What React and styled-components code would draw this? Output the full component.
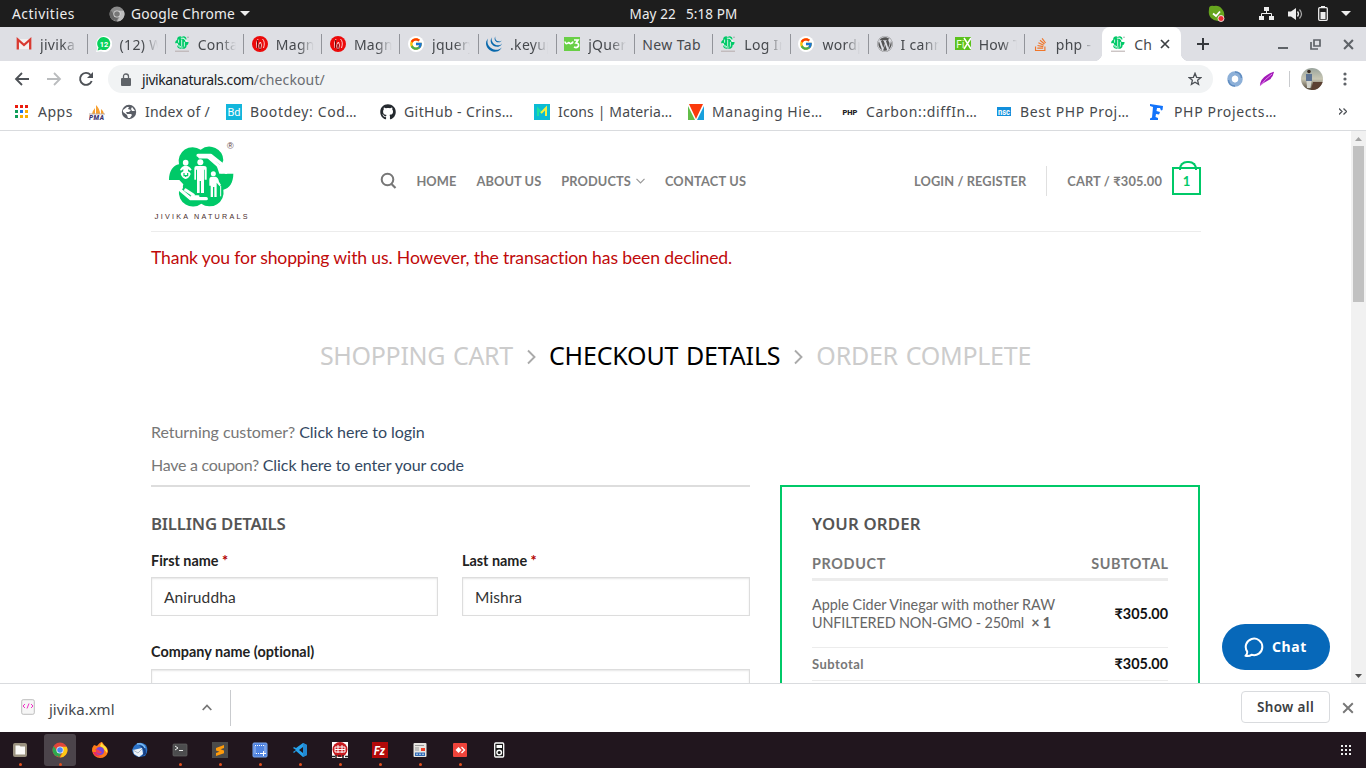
import React from "react";
import styled, { createGlobalStyle } from "styled-components";
import { FcGoogle } from "react-icons/fc";
import { FaWordpress, FaGithub, FaStackOverflow } from "react-icons/fa";
import { SiJquery } from "react-icons/si";

const UI = `"Noto Sans", "Open Sans", sans-serif`;
const LATO = `Lato, "Noto Sans", sans-serif`;
const GREEN = "#00c968";

const Global = createGlobalStyle`
  *{box-sizing:border-box}
  body{margin:0;background:#fff;overflow:hidden}
  svg{display:block;flex:none}
`;

const Screen = styled.div`
  width: 1366px;
  height: 768px;
  display: flex;
  flex-direction: column;
  overflow: hidden;
  font-family: ${UI};
  white-space: nowrap;
`;

const Label = styled.span`
  font-size: ${(p) => p.$size || 14}px;
  letter-spacing: ${(p) => p.$ls || 0}px;
  color: ${(p) => p.$color || "inherit"};
  font-weight: ${(p) => p.$weight || 400};
`;

/* ---------- desktop top bar ---------- */
const TopBar = styled.div`
  height: 27px;
  flex: none;
  background: #1d1d1d;
  color: #ededed;
  display: grid;
  grid-template-columns: 600px 166px 600px;
  align-items: center;
`;
const TopLeft = styled.div`
  display: flex;
  align-items: center;
  padding-left: 12px;
  & > svg:first-of-type { margin: 0 6px 0 34px; }
  & > svg:last-of-type { margin-left: 5px; }
`;
const Clock = styled.div`
  display: flex;
  justify-content: center;
  gap: 10px;
  padding-left: 1px;
`;
const Tray = styled.div`
  display: flex;
  align-items: center;
  justify-content: flex-end;
  padding-right: 15px;
`;
const TrayIcon = styled.div`
  margin-right: ${(p) => p.$gap}px;
`;

/* ---------- browser tabs ---------- */
const TabStrip = styled.div`
  height: 34px;
  flex: none;
  background: #dedfe4;
  display: flex;
  padding-left: 10px;
`;
const Tab = styled.div`
  width: 78.1px;
  height: 34px;
  display: flex;
  align-items: center;
  padding-left: ${(p) => (p.$first ? 6 : 7.5)}px;
  flex: none;
  background: linear-gradient(#92949a, #92949a) right 0 top 7px / ${(p) => (p.$last ? 0 : 1)}px 20px no-repeat;
`;
const TabTitle = styled.div`
  width: 38px;
  margin-left: 8px;
  overflow: hidden;
  font-size: 14px;
  letter-spacing: 0.3px;
  color: #46494d;
  mask-image: linear-gradient(90deg, #000 60%, transparent 100%);
`;
const NewTabTitle = styled(TabTitle)`
  width: 64px;
  margin-left: 0;
  letter-spacing: 0.4px;
  mask-image: none;
`;
const ActiveTab = styled.div`
  width: 79px;
  height: 34px;
  margin-left: -1px;
  background: #fff;
  border-radius: 8px 8px 0 0;
  display: flex;
  align-items: center;
  padding-left: 8px;
  position: relative;
  font-size: 14px;
  color: #46494d;
  &::before, &::after {
    content: "";
    position: absolute;
    bottom: 0;
    width: 8px;
    height: 8px;
  }
  &::before { left: -8px; background: radial-gradient(circle at 0 0, transparent 8px, #fff 8.5px); }
  &::after { right: -8px; background: radial-gradient(circle at 100% 0, transparent 8px, #fff 8.5px); }
  & > span { margin: 0 8px 0 8px; width: 18px; overflow: hidden; }
`;
const WindowButtons = styled.div`
  flex: 1;
  display: flex;
  align-items: center;
  padding-left: 16px;
  svg:nth-child(2) { margin-left: 69px; }
  svg:nth-child(3) { margin-left: 22px; }
  svg:nth-child(4) { margin-left: 22px; }
`;

/* ---------- toolbar ---------- */
const Toolbar = styled.div`
  height: 35px;
  flex: none;
  background: #fff;
  display: flex;
  align-items: center;
  padding-left: 14px;
`;
const NavIcons = styled.div`
  display: flex;
  gap: 16px;
  width: 94px;
`;
const Address = styled.div`
  width: 1105px;
  height: 28px;
  border-radius: 14px;
  background: #f1f3f4;
  margin-top: 1px;
  display: flex;
  align-items: center;
  padding: 0 11px 0 13px;
  color: #202124;
  & > span:first-of-type { margin-left: 11px; }
  & > svg:last-child { margin-left: auto; }
`;
const Extensions = styled.div`
  display: flex;
  align-items: center;
  padding-left: 14px;
  & > svg:nth-child(2) { margin-left: 16px; }
  & > svg:last-child { margin-left: 20px; }
`;
const ToolDivider = styled.div`
  width: 1px;
  height: 16px;
  margin: 0 11px 0 14px;
  background: #c9cbce;
`;

/* ---------- bookmarks ---------- */
const Bookmarks = styled.div`
  height: 35px;
  flex: none;
  background: #fff;
  border-bottom: 1px solid #d9dbde;
  display: flex;
  align-items: center;
  padding: 0 0 3px 15px;
  color: #46494d;
`;
const Bookmark = styled.div`
  width: ${(p) => p.$w}px;
  flex: none;
  display: flex;
  align-items: center;
  gap: ${(p) => p.$gap ?? 8}px;
`;

/* ---------- web page ---------- */
const Viewport = styled.div`
  height: 552px;
  flex: none;
  display: flex;
  background: #fff;
  position: relative;
  overflow: hidden;
`;
const Page = styled.main`
  width: 1351px;
  height: 552px;
  overflow: hidden;
  font-family: ${LATO};
  font-variant-ligatures: none;
`;
const Container = styled.div`
  width: 1050px;
  margin: 0 0 0 151px;
`;
const Header = styled.header`
  height: 101px;
  border-bottom: 1px solid #ececec;
  display: flex;
  align-items: center;
`;
const LogoBox = styled.div`
  width: 229px;
  height: 100px;
  padding: 8px 0 0 1px;
`;
const Nav = styled.nav`
  display: flex;
  align-items: center;
  font-size: 12.8px;
  font-weight: 700;
  color: #7d7d7d;
  letter-spacing: 0.1px;
  margin-top: -1px;
`;
const NavLink = styled.a`
  margin-left: ${(p) => p.$ml || 20}px;
  letter-spacing: ${(p) => p.$ls || 0.1}px;
  display: flex;
  align-items: center;
  gap: 5px;
`;
const Account = styled(Nav)`
  margin-left: auto;
`;
const AccountRule = styled.div`
  width: 1px;
  height: 30px;
  background: #e0e0e0;
  margin: 0 20px;
`;
const CartTotal = styled.span`
  letter-spacing: 0.17px;
`;
const CartBag = styled.div`
  width: 29px;
  height: 28px;
  border: 2px solid ${GREEN};
  margin-left: 10px;
  color: ${GREEN};
  display: flex;
  align-items: center;
  justify-content: center;
  position: relative;
  font-size: 13px;
  &::before {
    content: "";
    position: absolute;
    width: 14px;
    height: 7px;
    left: 5px;
    top: -8px;
    border: 2px solid ${GREEN};
    border-bottom: 0;
    border-radius: 8px 8px 0 0;
  }
`;
const Notice = styled.p`
  margin: 13px 0 0;
  line-height: 26px;
  font-size: 17.6px;
  letter-spacing: -0.14px;
  color: #c00a0a;
`;
const Steps = styled.div`
  height: 40px;
  margin: 64px 0 0 -1px;
  display: flex;
  align-items: center;
  justify-content: center;
  font-family: ${UI};
  font-size: 25px;
  color: #ccc;
  text-transform: uppercase;
`;
const Step = styled.span`
  letter-spacing: ${(p) => p.$ls}px;
  word-spacing: 1.5px;
  color: ${(p) => (p.$current ? "#000" : "#ccc")};
`;
const StepArrow = styled.svg`
  margin: 3px 13px 0 14px;
`;
const Prompt = styled.p`
  margin: 0;
  height: 33px;
  line-height: 26px;
  font-size: 16px;
  letter-spacing: ${(p) => p.$ls}px;
  color: #777;
  & > a { color: #334862; letter-spacing: -0.05px; }
`;
const Prompts = styled.div`
  padding-top: 44px;
  height: 110px;
`;
const Columns = styled.div`
  display: flex;
  gap: 30px;
`;
const Billing = styled.section`
  width: 599px;
  border-top: 2px solid #ddd;
  padding-top: 24px;
`;
const SectionTitle = styled.h3`
  margin: -1px 0 1px;
  height: 28px;
  line-height: 28px;
  font-family: ${UI};
  font-size: 16.8px;
  font-weight: 600;
  letter-spacing: ${(p) => p.$ls || 0}px;
  color: #555;
`;
const FieldRow = styled.div`
  display: grid;
  grid-template-columns: 287px 288px;
  gap: 24px;
  padding-top: 10px;
`;
const Field = styled.div`
  & > label {
    display: block;
    font-size: 14.4px;
    line-height: 24px;
    height: ${(p) => p.$labelHeight || 28}px;
    font-weight: 700;
    color: #222;
    letter-spacing: ${(p) => p.$ls || 0}px;
  }
  & em { font-style: normal; color: #b20000; }
`;
const Input = styled.div`
  height: 39px;
  margin-bottom: 24px;
  border: 1px solid #ddd;
  box-shadow: inset 0 1px 2px rgba(0, 0, 0, 0.1);
  padding: 0 12px;
  line-height: 38px;
  font-size: 15.5px;
  letter-spacing: 0.1px;
  color: #333;
`;
const Order = styled.section`
  width: 420px;
  height: 300px;
  border: 2px solid ${GREEN};
  padding: 24px 30px 0;
`;
const OrderHead = styled.div`
  height: 42px;
  padding-top: 13px;
  border-bottom: 3px solid #ececec;
  display: flex;
  justify-content: space-between;
  font-size: 14.4px;
  line-height: 24px;
  font-weight: 700;
  letter-spacing: 0.65px;
  color: #777;
  & > span:last-child { letter-spacing: 0.6px; margin-right: -0.6px; }
`;
const OrderRow = styled.div`
  height: ${(p) => p.$h}px;
  border-bottom: 1px solid #ececec;
  display: flex;
  justify-content: space-between;
  align-items: center;
  font-size: 14.4px;
  line-height: 18px;
  color: #666;
`;
const Variant = styled.div`
  letter-spacing: -0.14px;
`;
const Price = styled.strong`
  color: #111;
  font-size: 14.4px;
`;
const Scrollbar = styled.div`
  width: 15px;
  background: #f1f1f1;
  display: flex;
  flex-direction: column;
  align-items: center;
  justify-content: space-between;
  padding: 6px 0 5px;
`;
const Thumb = styled.div`
  width: 11px;
  height: 156px;
  background: #c1c1c1;
  margin: 5px 0 auto;
`;
const ChatButton = styled.div`
  position: absolute;
  left: 1222px;
  top: 493px;
  width: 108px;
  height: 46px;
  border-radius: 23px;
  background: #0768b9;
  color: #fff;
  display: flex;
  align-items: center;
  padding: 0 0 1px 22px;
  gap: 8px;
`;

/* ---------- downloads ---------- */
const Downloads = styled.div`
  height: 49px;
  flex: none;
  border-top: 1px solid #d9dbde;
  background: #fff;
  display: flex;
  align-items: center;
  padding-right: 12px;
  color: #46494d;
`;
const DownloadItem = styled.div`
  width: 231px;
  height: 36px;
  border-right: 1px solid #c9cbce;
  display: flex;
  align-items: center;
  padding: 0 18px 0 21px;
  & > span { margin: 1px auto 0 14px; }
  & > svg { margin-top: -2px; }
`;
const ShowAll = styled.div`
  width: 89px;
  height: 32px;
  margin: 0 12px 2px auto;
  border: 1px solid #d9dbde;
  border-radius: 4px;
  display: flex;
  align-items: center;
  justify-content: center;
`;

/* ---------- dock ---------- */
const Dock = styled.div`
  height: 36px;
  flex: none;
  background: #21161e;
  display: flex;
  align-items: center;
`;
const DockSlot = styled.div`
  width: 40px;
  height: 36px;
  padding: 2px 4px;
`;
const DockApp = styled.div`
  width: 32px;
  height: 32px;
  border-radius: 3px;
  background: ${(p) => (p.$active ? "#4c444b" : "transparent")};
  display: flex;
  flex-direction: column;
  align-items: center;
  padding-top: 8px;
  &::after {
    content: "";
    width: 3px;
    height: 3px;
    margin-top: 5px;
    border-radius: 50%;
    background: ${(p) => (p.$running ? "#e0501f" : "transparent")};
  }
`;
const AppsGrid = styled.div`
  margin: 0 15px 0 auto;
`;

/* ---------- drawings ---------- */
const BrandFlower = () => (
  <>
    <path
      fill={GREEN}
      d="M87 147C87 120 100 103 117 100A42 42 0 0 1 182 56A42 42 0 0 1 250 88L246 98L230 104L238 128H280C280 155 268 172 250 176A42 42 0 0 1 184 218A42 42 0 0 1 117 178L128 168L130 160L118 147Z"
    />
    <g stroke="#fff" fill="none" strokeLinecap="round" strokeLinejoin="round">
      <path d="M174 73H212L244 98M206 79L236 105L246 122M121 177L152 203H199M137 177L160 192" strokeWidth="9.5" />
      <path d="M178 79H205M155 196H175" strokeWidth="7" />
      <path d="M112 152L124 170M246 106L258 124" strokeWidth="10" />
    </g>
  </>
);
const BrandLogo = () => (
  <svg width="98" height="84" viewBox="0 0 98 84">
    <g transform="translate(-12,-8) scale(.33333)">
      <BrandFlower />
      <g fill="#fff">
        <circle cx="137" cy="95" r="8.500" />
        <path d="M120 116Q126 104 137 104T155 116L150 119Q147 116 144 115V121Q152 124 152 129Q147 143 137 144Q127 143 122 129Q122 124 130 121V115Q127 116 123 119Z" />
        <circle cx="181" cy="94" r="9" />
        <path d="M163 112Q163 105 170 105H192Q200 105 200 112V146H194V116H192V186H183V150H179V186H171V116H168V146H163Z" />
        <circle cx="220" cy="128" r="7.500" />
        <path d="M208 146Q208 137 216 137H226Q235 139 237 152L243 162L239 166L230 155V198H223V168H219V198H212V164H208Z" />
      </g>
      <path d="M242 165V196" stroke="#fff" strokeWidth="3" />
      <path d="M132 126V134H143V126M137 134V138" stroke={GREEN} strokeWidth="3.500" fill="none" />
    </g>
    <text x="75" y="9.500" fontFamily="Liberation Sans" fontSize="9" fill="#5e4040">®</text>
    <text x="2.500" y="80" fontFamily="Liberation Sans" fill="#4a2c2c" fontSize="8" textLength="93" lengthAdjust="spacing">
      J<tspan fontSize="7.200">IVIKA NATURALS</tspan>
    </text>
  </svg>
);
const BrandFav = () => (
  <svg width="16" height="16" viewBox="0 0 16 16">
    <g transform="translate(-4.900,-3) scale(.0695)">
      <BrandFlower />
      <path d="M137 95V140M181 94V186M220 128V196" stroke="#e6f9ef" strokeWidth="13" />
    </g>
    <path d="M1 15.200h14" stroke="#b5acac" strokeWidth="1" />
    <circle cx="14" cy="1.200" r=".7" fill="#999" />
  </svg>
);
const Gmail = () => (
  <svg width="16" height="16" viewBox="0 0 16 16">
    <path d="M2 3h12v10H2z" fill="#f3f0f0" />
    <path d="M1.800 13.500V3.500L8 9l6.200-5.500v10" fill="none" stroke="#d93a31" strokeWidth="2.300" />
  </svg>
);
const WhatsApp = () => (
  <svg width="16" height="16" viewBox="0 0 16 16">
    <path d="M0 16l1.300-4A8 8 0 1 1 5 15.300Z" fill="#fff" />
    <path d="M1.500 14.500l1-3a6.500 6.500 0 1 1 2.500 2Z" fill="#08d15b" />
    <text x="8" y="10.500" textAnchor="middle" fontFamily="Roboto" fontWeight="700" fontSize="7.500" fill="#fff">12</text>
  </svg>
);
const Magento = () => (
  <svg width="16" height="16" viewBox="0 0 16 16">
    <circle cx="8" cy="8" r="8" fill="#ec0a0a" />
    <path d="M5 12Q3.500 6 6 3M7.500 13q-1.500-3 0-6l1-1q2 3 0 7M10.500 3q3 3 1 9" stroke="#fff" strokeWidth=".8" fill="none" />
    <path d="M8 8v6M5.500 4v8" stroke="#400" strokeWidth=".8" />
  </svg>
);
const GoogleRound = () => (
  <svg width="16" height="16" viewBox="0 0 16 16">
    <circle cx="8" cy="8" r="8" fill="#fff" />
    <FcGoogle x="1" y="1" size={14} />
  </svg>
);
const W3 = () => (
  <svg width="16" height="16" viewBox="0 0 16 16">
    <rect y="1" width="16" height="14" fill="#69cf46" />
    <path d="M1 5.500q.3 2.500 2 2T5 6q.3 2 2 1.500T9 5.500" stroke="#fff" strokeWidth="1.600" fill="none" />
    <path d="M10 4h4l-2 3q3 0 2.500 3-1.500 2.500-4.500 1" stroke="#fff" strokeWidth="1.700" fill="none" />
  </svg>
);
const FixIcon = () => (
  <svg width="16" height="16" viewBox="0 0 16 16">
    <rect y="1" width="16" height="13" fill="#5bc21c" />
    <text x="1" y="12" fontFamily="Noto Sans" fontSize="11" fill="#e9ffdd" textLength="8.500" lengthAdjust="spacingAndGlyphs">Fi</text>
    <path d="M9 2l7 11M16 2L9 13" stroke="#fff" strokeWidth="1.500" />
  </svg>
);
const Letters = ({ bg, fg, text, size, weight = 700, h = 16, family = "Roboto", tl }) => (
  <svg width="16" height={h} viewBox={`0 0 16 ${h}`}>
    <rect x={h < 16 ? 1 : 0} width={h < 16 ? 14 : 16} height={h} fill={bg} />
    <text x="8" y={h / 2 + size * 0.36} textAnchor="middle" fontFamily={family} fontWeight={weight} fontSize={size} fill={fg} textLength={tl} lengthAdjust="spacingAndGlyphs">{text}</text>
  </svg>
);
const ChromeMark = ({ mono, size = 16 }) => (
  <svg width={size} height={size} viewBox="0 0 16 16">
    <circle cx="8" cy="8" r="7.500" fill={mono ? "#8b8b8b" : "#e0453a"} />
    <path d="M1.500 4.300 6 10.500l-1 4.300A7.500 7.500 0 0 1 1.500 4.300Z" fill={mono ? "#666" : "#2da94f"} />
    <path d="M8 15.500 11.500 9 9.500 4.800h5.300A7.500 7.500 0 0 1 7 15.400Z" fill={mono ? "#bdbdbd" : "#fdc913"} />
    <path d="M6 10.500 2 4.500q0 6 5 10.900L9.500 11Z" fill={mono ? "#666" : "#2da94f"} />
    <circle cx="8" cy="8" r="3.600" fill={mono ? "#ddd" : "#f4f4f4"} />
    <circle cx="8" cy="8" r="2.800" fill={mono ? "#777" : "#4889f4"} />
  </svg>
);
const Caret = ({ w = 10, h = 5, color = "#ededed", up }) => (
  <svg width={w} height={h} viewBox="0 0 10 5" preserveAspectRatio="none">
    <path d={up ? "M0 5 5 0l5 5Z" : "M0 0h10L5 5Z"} fill={color} />
  </svg>
);
const Cross = ({ size = 10, color = "#5f6368", sw = 2 }) => (
  <svg width={size} height={size} viewBox="0 0 10 10">
    <path d="M1 1l8 8M9 1 1 9" stroke={color} strokeWidth={sw} />
  </svg>
);

const tabs = [
  { icon: <Gmail />, title: "jivika", first: true },
  { icon: <WhatsApp />, title: "(12) W" },
  { icon: <BrandFav />, title: "Conta" },
  { icon: <Magento />, title: "Magne" },
  { icon: <Magento />, title: "Magne" },
  { icon: <GoogleRound />, title: "jquery" },
  { icon: <SiJquery size={16} color="#0868ac" />, title: ".keyup" },
  { icon: <W3 />, title: "jQuery" },
  { title: "New Tab" },
  { icon: <BrandFav />, title: "Log In" },
  { icon: <GoogleRound />, title: "wordp" },
  { icon: <FaWordpress size={16} color="#555" />, title: "I cann" },
  { icon: <FixIcon />, title: "How T" },
  { icon: <FaStackOverflow size={15} color="#f0762a" />, title: "php - t", last: true },
];

const dock = [
  { running: true, icon: <svg width="16" height="16" viewBox="0 0 16 16"><rect x="1" y="1" width="14" height="14" rx="2" fill="#9a917f" /><path d="M3.500 3.500h4l1 1h4.500v8H3.500Z" fill="#faf9f7" /></svg> },
  { running: true, active: true, icon: <ChromeMark /> },
  { icon: <svg width="16" height="16" viewBox="0 0 16 16"><path d="M2 3l3 1q3-4 5-4l3 4q3 2 3 6-2 6-8 6T0 9q0-4 2-6Z" fill="#ff7a18" /><path d="M10 0q0 3 3 4 3 3 2 7l-4-5-3-2Z" fill="#ffe03c" /><circle cx="8" cy="9" r="4" fill="#7542d8" /><path d="M3 7q3 0 5 2l2 1q-2 3-5 1Z" fill="#f03b5c" /><path d="M1 10q2 6 9 4-5 0-6-4Z" fill="#ed2861" /></svg> },
  { icon: <svg width="16" height="16" viewBox="0 0 16 16"><path d="M2 4q5-6 12-1 3 6-1 11l-6 1Q1 14 0 8Z" fill="#2c73c8" /><path d="M7 3q8 1 7 9l-5 3q6-6-2-12Z" fill="#173f82" /><path d="M1 8l9-2 1 6-4 3-5-3Z" fill="#edf2f7" /><path d="M1 8l5 3 4-4" stroke="#a8b8c8" fill="none" /><path d="M5 2q6-1 8 4" stroke="#7bbaf1" strokeWidth="1.500" fill="none" /></svg> },
  { running: true, icon: <svg width="16" height="16" viewBox="0 0 16 16"><rect x="1" y="2" width="14" height="12" rx="1" fill="#4c4c4e" stroke="#666" strokeWidth=".7" /><path d="M3 4l3 2-3 2M7 8.500h4" stroke="#eee" fill="none" /></svg> },
  { running: true, icon: <svg width="16" height="16" viewBox="0 0 16 16"><rect width="16" height="16" fill="#4b4b4b" /><path d="M4 6l8-3v3L8.500 7.300 12 8.500v2.700L4 14v-3l3.500-1.200L4 8.600Z" fill="#ff9a0a" /></svg> },
  { running: true, icon: <svg width="16" height="16" viewBox="0 0 16 16"><rect x="1" y="1" width="14" height="14" rx="1" fill="#4f83e0" stroke="#7ba6ef" /><path d="M3 3.500h10v8H3Z" fill="none" stroke="#fff" strokeDasharray="1 1" /><path d="M9 11.500h5M11.500 9v5" stroke="#fff" /></svg> },
  { running: true, icon: <svg width="16" height="16" viewBox="0 0 16 16"><path d="M11 1l4 2v10l-4 2-7-6-2 2-1-1 3-2-3-2 1-1 2 1Zm0 4L7 8l4 3Z" fill="#25a2ed" /><path d="M11 1l4 2v10l-4 2Z" fill="#2388d1" /></svg> },
  { running: true, icon: <svg width="16" height="16" viewBox="0 0 16 16"><rect width="16" height="16" fill="#fff" /><circle cx="8" cy="7.500" r="7.500" fill="#c6191e" /><path d="M3 5h10v5H3ZM6 3v8M10 3v8M3 7.500h10" stroke="#fff" fill="none" /><path d="M0 14.500h3M4 13v3M6 14h3M11 13v3M13 14.500h3" stroke="#222" strokeWidth="1.500" /></svg> },
  { running: true, icon: <svg width="16" height="16" viewBox="0 0 16 16"><rect width="16" height="16" fill="#b30a0a" /><text x="7.500" y="12.500" textAnchor="middle" fontFamily="Roboto" fontStyle="italic" fontWeight="700" fontSize="12.500" fill="#fff" textLength="11" lengthAdjust="spacingAndGlyphs">Fz</text></svg> },
  { running: true, icon: <svg width="16" height="16" viewBox="0 0 16 16"><rect x="1.500" y="1" width="13" height="14" rx="1" fill="#e8e5e1" /><path d="M3 3.500h9M3 6h4M3 8h4" stroke="#999" /><rect x="9" y="6" width="4" height="3" fill="#ee3e27" /><rect x="3" y="10.500" width="10" height="3.500" fill="#326bb5" /><path d="M4 12.200h8" stroke="#cfe1f5" strokeDasharray="2 1" /></svg> },
  { running: true, icon: <svg width="16" height="16" viewBox="0 0 16 16"><rect x="1" y="1" width="14" height="14" rx="1" fill="#ef443b" /><path d="M6.500 5 9.500 8l-3 3-3-3Z" fill="#fff" /><path d="M9.500 5l3 3-3 3" stroke="#fff" fill="none" strokeWidth="1.400" /></svg> },
  { icon: <svg width="16" height="16" viewBox="0 0 16 16"><rect x="2.700" y="1" width="9" height="14" rx="1" fill="#161616" stroke="#fff" strokeWidth="1.300" /><path d="M4.500 3h5.500v3H4.500Z" fill="#fff" /><circle cx="7.200" cy="10.500" r="2.300" fill="none" stroke="#fff" strokeWidth="1.400" /></svg> },
];

export default function App() {
  return (
    <Screen>
      <Global />
      <TopBar>
        <TopLeft>
          <Label $size={13.8} $ls={0.55}>Activities</Label>
          <ChromeMark mono />
          <Label $size={13.8} $ls={0.17}>Google Chrome</Label>
          <Caret />
        </TopLeft>
        <Clock>
          <Label $size={13.5} $ls={0.12}>May 22</Label>
          <Label $size={13.5} $ls={0.12}>5:18 PM</Label>
        </Clock>
        <Tray>
          <TrayIcon $gap={33}>
            <svg width="17" height="17" viewBox="0 0 17 17"><path d="M1 4q0-4 5-3 5-1 8 3 3 3 2 8-1 4-6 4-4 0-7-3Q0 10 1 4Z" fill="#66a51e" /><path d="M5 8.500l3 2.500 4-4.500" stroke="#fff" strokeWidth="1.800" fill="none" /><circle cx="13" cy="13.500" r="3" fill="#ed2d34" stroke="#fff" strokeWidth=".8" /></svg>
          </TrayIcon>
          <TrayIcon $gap={14}>
            <svg width="16" height="14" viewBox="0 0 16 14"><path d="M6 0h5v4H6ZM1 9h5v4H1ZM11 9h5v4h-5Z" fill="#ededed" /><path d="M8.500 4v2.500M3.500 9V6.500h10V9" stroke="#ededed" fill="none" /></svg>
          </TrayIcon>
          <TrayIcon $gap={15}>
            <svg width="15" height="14" viewBox="0 0 15 14"><path d="M0 4.500h3L8 1v12L3 9.500H0Z" fill="#ededed" /><path d="M9.500 4.500q2 2.500 0 5" stroke="#ededed" fill="none" strokeWidth="1.300" /><path d="M11.500 2.500q4 4.500 0 9" stroke="#aaa" fill="none" strokeWidth="1.200" /></svg>
          </TrayIcon>
          <TrayIcon $gap={13}>
            <svg width="10" height="15" viewBox="0 0 10 15"><path d="M3 0h4v2H3Z" fill="#ededed" /><rect x=".7" y="1.700" width="8.600" height="12.600" rx="1" fill="none" stroke="#ededed" strokeWidth="1.300" /><rect x="2.500" y="6" width="5" height="7" fill="#ededed" /></svg>
          </TrayIcon>
          <Caret />
        </Tray>
      </TopBar>

      <TabStrip>
        {tabs.map((t, i) => (
          <Tab key={i} $first={t.first} $last={t.last}>
            {t.icon}
            {t.icon ? <TabTitle>{t.title}</TabTitle> : <NewTabTitle>{t.title}</NewTabTitle>}
          </Tab>
        ))}
        <ActiveTab>
          <BrandFav />
          <span>Ch</span>
          <Cross size={10} color="#3c4043" sw={1.7} />
        </ActiveTab>
        <WindowButtons>
          <svg width="12" height="12" viewBox="0 0 12 12"><path d="M6 0v12M0 6h12" stroke="#35383c" strokeWidth="2" /></svg>
          <svg width="10" height="10" viewBox="0 0 10 10"><path d="M0 9h10" stroke="#5f6368" strokeWidth="2" /></svg>
          <svg width="11" height="11" viewBox="0 0 11 11"><path d="M4 1h6v6H4ZM1 3v7h7" stroke="#5f6368" strokeWidth="1.700" fill="none" /></svg>
          <Cross size={11} sw={1.9} />
        </WindowButtons>
      </TabStrip>

      <Toolbar>
        <NavIcons>
          <svg width="16" height="16" viewBox="0 0 16 16"><path d="M15 8H2M8 2 2 8l6 6" stroke="#4d5156" strokeWidth="1.800" fill="none" /></svg>
          <svg width="16" height="16" viewBox="0 0 16 16"><path d="M1 8h13M8 2l6 6-6 6" stroke="#babcbe" strokeWidth="1.800" fill="none" /></svg>
          <svg width="16" height="16" viewBox="0 0 16 16"><path d="M13.700 10A6 6 0 1 1 12.500 3.800" stroke="#4d5156" strokeWidth="1.900" fill="none" /><path d="M15 1v6H9Z" fill="#4d5156" /></svg>
        </NavIcons>
        <Address>
          <svg width="10" height="13" viewBox="0 0 10 13"><path d="M1 5h8q1 0 1 1v6q0 1-1 1H1q-1 0-1-1V6q0-1 1-1Z" fill="#5f6368" /><path d="M2.500 5V3.500q0-2.500 2.500-2.500t2.500 2.500V5" stroke="#5f6368" strokeWidth="1.300" fill="none" /></svg>
          <Label $size={14} $ls={-0.42}>jivikanaturals.com</Label>
          <Label $size={14} $ls={0.12} $color="#6a6d72">/checkout/</Label>
          <svg width="14" height="14" viewBox="0 0 14 14"><path d="M7 1.300l1.600 4 4.200.3-3.200 2.700 1 4.100L7 10.200l-3.600 2.200 1-4.100L1.200 5.600l4.200-.3Z" fill="none" stroke="#4d5156" strokeWidth="1.300" /></svg>
        </Address>
        <Extensions>
          <svg width="16" height="16" viewBox="0 0 16 16"><circle cx="8" cy="8" r="5.500" fill="none" stroke="#8db0d8" strokeWidth="4.500" /><path d="M8 1q6 0 6.500 6M8 15q-6 0-6.500-6" stroke="#5f8cc0" strokeWidth="1.500" fill="none" /><ellipse cx="8" cy="8" rx="2.200" ry="3.600" fill="#fff" /></svg>
          <svg width="16" height="16" viewBox="0 0 16 16"><path d="M1 15Q1 8 8 4T15 1Q14 7 9 9.500T1 15Z" fill="#a31bb8" /><path d="M1 15Q6 8 13 3" stroke="#e58bf0" fill="none" /></svg>
          <ToolDivider />
          <svg width="22" height="22" viewBox="0 0 22 22">
            <defs><clipPath id="face"><circle cx="11" cy="11" r="11" /></clipPath><linearGradient id="sky" x2="0" y2="1"><stop stopColor="#9aa49d" /><stop offset=".5" stopColor="#c9c7b4" /><stop offset="1" stopColor="#4b4033" /></linearGradient></defs>
            <g clipPath="url(#face)"><rect width="22" height="22" fill="url(#sky)" /><path d="M12 14h10v8H10Z" fill="#5b4032" /><circle cx="8" cy="3.500" r="1.800" fill="#3b2d25" /><path d="M5 6h6v7H5Z" fill="#5d7393" /><path d="M5.500 13h5l-1 7H6Z" fill="#d2d3cc" /></g>
          </svg>
          <svg width="4" height="14" viewBox="0 0 4 14"><circle cx="2" cy="2" r="1.600" fill="#5f6368" /><circle cx="2" cy="7" r="1.600" fill="#5f6368" /><circle cx="2" cy="12" r="1.600" fill="#5f6368" /></svg>
        </Extensions>
      </Toolbar>

      <Bookmarks>
        <Bookmark $w={74} $gap={10}>
          <svg width="13" height="13" viewBox="0 0 13 13">
            {["#ea1c0e", "#ea1c0e", "#ea1c0e", "#109d58", "#1b73e8", "#fbae00", "#109d58", "#fbae00", "#fbae00"].map((c, i) => (
              <rect key={i} x={(i % 3) * 5} y={Math.floor(i / 3) * 5} width="3" height="3" fill={c} />
            ))}
          </svg>
          <Label $size={14} $ls={0.5}>Apps</Label>
        </Bookmark>
        <Bookmark $w={32}>
          <svg width="16" height="16" viewBox="0 0 16 16"><path d="M3 10Q4 6 6 4v6ZM7 10V1q4 4 4 9ZM12 10V5q3 2 3 5Z" fill="#f6a133" /><path d="M0 10h16" stroke="#bba8a0" /><text x="0" y="15.800" fontFamily="Roboto" fontStyle="italic" fontWeight="900" fontSize="6.500" fill="#3c3570" textLength="15">PMA</text></svg>
        </Bookmark>
        <Bookmark $w={105}>
          <svg width="16" height="16" viewBox="0 0 16 16"><circle cx="8" cy="8" r="7.200" fill="#5a5e66" /><path d="M2 6l4-3 2 0-1 2 3 1-2 2H5l1 2 4 0 1 1-2 3-2 0-1-3-4-3ZM11 3l3 4-3 0-1-2Z" fill="#fff" /></svg>
          <Label $size={14} $ls={0.2}>Index of /</Label>
        </Bookmark>
        <Bookmark $w={154}>
          <Letters bg="#12b6dc" fg="#fff" text="Bd" size={11} weight={400} />
          <Label $size={14} $ls={0.65}>Bootdey: Cod…</Label>
        </Bookmark>
        <Bookmark $w={154}>
          <FaGithub size={16} color="#24292e" />
          <Label $size={14} $ls={0.42}>GitHub - Crins…</Label>
        </Bookmark>
        <Bookmark $w={154}>
          <svg width="16" height="16" viewBox="0 0 16 16"><rect width="16" height="16" fill="#0bbcd4" /><path d="M4 12V5l4 4" stroke="#1fe0a0" strokeWidth="2" fill="none" /><path d="M7 9l5-5v8" stroke="#f4ef3d" strokeWidth="2" fill="none" /></svg>
          <Label $size={14} $ls={0.13}>Icons | Materia…</Label>
        </Bookmark>
        <Bookmark $w={154}>
          <svg width="16" height="16" viewBox="0 0 16 16"><path d="M1 0h14L8 15Z" fill="#fb3a0c" /><path d="M0 2l7 14H0Z" fill="#62bd48" /><path d="M16 2 9 16h7Z" fill="#18a0dc" /></svg>
          <Label $size={14} $ls={0.57}>Managing Hie…</Label>
        </Bookmark>
        <Bookmark $w={154}>
          <Letters bg="#fff" fg="#222" text="PHP" size={7} weight={900} tl={15} />
          <Label $size={14} $ls={0.63}>Carbon::diffIn…</Label>
        </Bookmark>
        <Bookmark $w={153}>
          <Letters bg="#118fdc" fg="#fff" text="nsc" size={8.5} h={9} tl={12} />
          <Label $size={14} $ls={0.65}>Best PHP Proj…</Label>
        </Bookmark>
        <Bookmark $w={190} $gap={9}>
          <svg width="16" height="16" viewBox="0 0 16 16"><path d="M1 0l13 2-.5 4-1.500.5-1-2.500H8l-.5 3L11 8l-1 2.500-3-.5-.5 3L9 14v2H1v-1.500l2-1L4 3 1 2Z" fill="#1273fb" /></svg>
          <Label $size={14} $ls={0.65}>PHP Projects…</Label>
        </Bookmark>
        <svg width="8" height="7" viewBox="0 0 8 7"><path d="M0 .5l3 3-3 3M4.500 .5l3 3-3 3" stroke="#4d5156" strokeWidth="1.300" fill="none" /></svg>
      </Bookmarks>

      <Viewport>
        <Page>
          <Container>
            <Header>
              <LogoBox><BrandLogo /></LogoBox>
              <Nav>
                <svg width="17" height="17" viewBox="0 0 17 17"><circle cx="7.500" cy="7.500" r="5.800" stroke="#777" strokeWidth="2" fill="none" /><path d="M11.500 12l4 4" stroke="#777" strokeWidth="2.200" /></svg>
                <NavLink $ml={19.4}>HOME</NavLink>
                <NavLink>ABOUT US</NavLink>
                <NavLink>
                  PRODUCTS
                  <svg width="9" height="6" viewBox="0 0 9 6"><path d="M.5 .8l4 4 4-4" stroke="#999" strokeWidth="1.200" fill="none" /></svg>
                </NavLink>
                <NavLink $ls={0.2}>CONTACT US</NavLink>
              </Nav>
              <Account>
                <span>LOGIN / REGISTER</span>
                <AccountRule />
                <CartTotal>CART / ₹305.00</CartTotal>
                <CartBag>1</CartBag>
              </Account>
            </Header>
            <Notice>Thank you for shopping with us. However, the transaction has been declined.</Notice>
            <Steps>
              <Step $ls={-0.3}>Shopping cart</Step>
              <StepArrow width="9" height="16" viewBox="0 0 9 16"><path d="M1 1.500 7.500 8 1 14.500" stroke="#aaa" strokeWidth="1.900" fill="none" /></StepArrow>
              <Step $ls={-0.18} $current>Checkout details</Step>
              <StepArrow width="9" height="16" viewBox="0 0 9 16"><path d="M1 1.500 7.500 8 1 14.500" stroke="#aaa" strokeWidth="1.900" fill="none" /></StepArrow>
              <Step $ls={-0.25}>Order complete</Step>
            </Steps>
            <Prompts>
              <Prompt $ls={-0.06}>Returning customer? <a>Click here to login</a></Prompt>
              <Prompt $ls={-0.27}>Have a coupon? <a>Click here to enter your code</a></Prompt>
            </Prompts>
            <Columns>
              <Billing>
                <SectionTitle $ls={-0.2}>BILLING DETAILS</SectionTitle>
                <FieldRow>
                  <Field>
                    <label>First name <em>*</em></label>
                    <Input>Aniruddha</Input>
                  </Field>
                  <Field>
                    <label>Last name <em>*</em></label>
                    <Input>Mishra</Input>
                  </Field>
                </FieldRow>
                <Field $labelHeight={29} $ls={0.03}>
                  <label>Company name (optional)</label>
                  <Input />
                </Field>
              </Billing>
              <Order>
                <SectionTitle $ls={0.15}>YOUR ORDER</SectionTitle>
                <OrderHead><span>PRODUCT</span><span>SUBTOTAL</span></OrderHead>
                <OrderRow $h={67}>
                  <div>
                    Apple Cider Vinegar with mother RAW
                    <Variant>UNFILTERED NON-GMO - 250ml&nbsp; <b>× 1</b></Variant>
                  </div>
                  <Price>₹305.00</Price>
                </OrderRow>
                <OrderRow $h={33}>
                  <Label as="b" $size={13} $ls={0.45} $weight={700} $color="#777">Subtotal</Label>
                  <Price>₹305.00</Price>
                </OrderRow>
              </Order>
            </Columns>
          </Container>
        </Page>
        <Scrollbar>
          <Caret up w={7} h={4} color="#a3a3a3" />
          <Thumb />
          <Caret w={7} h={4} color="#505050" />
        </Scrollbar>
        <ChatButton>
          <svg width="20" height="20" viewBox="0 0 20 20"><path d="M3.200 14.600A8.300 8.300 0 1 1 7.500 17.800Q5 19.500 1.500 18.800 3.500 17 3.200 14.600Z" fill="none" stroke="#fff" strokeWidth="2" strokeLinejoin="round" /></svg>
          <Label $size={14} $weight={700} $ls={0.6}>Chat</Label>
        </ChatButton>
      </Viewport>

      <Downloads>
        <DownloadItem>
          <svg width="14" height="16" viewBox="0 0 14 16"><rect x=".7" y=".7" width="12.600" height="14.600" rx="1.500" fill="#f6f6f6" stroke="#bdbdbd" /><path d="M4 5 2 7l2 2M10 5l2 2-2 2M8 4.500 6 9.500" stroke="#f02fc8" strokeWidth="1" fill="none" /></svg>
          <Label $size={15}>jivika.xml</Label>
          <svg width="10" height="7" viewBox="0 0 10 7"><path d="M.7 6 5 1.500 9.300 6" stroke="#777" strokeWidth="1.800" fill="none" /></svg>
        </DownloadItem>
        <ShowAll><Label $size={13.5} $ls={0.35} $weight={600} $color="#3c4043">Show all</Label></ShowAll>
        <Cross size={12} color="#777" sw={1.6} />
      </Downloads>

      <Dock>
        {dock.map((d, i) => (
          <DockSlot key={i}>
            <DockApp $active={d.active} $running={d.running}>{d.icon}</DockApp>
          </DockSlot>
        ))}
        <AppsGrid>
          <svg width="10" height="10" viewBox="0 0 10 10">
            {Array.from({ length: 9 }, (_, i) => (
              <rect key={i} x={(i % 3) * 4} y={Math.floor(i / 3) * 4} width="2" height="2" fill="#ededed" />
            ))}
          </svg>
        </AppsGrid>
      </Dock>
    </Screen>
  );
}
